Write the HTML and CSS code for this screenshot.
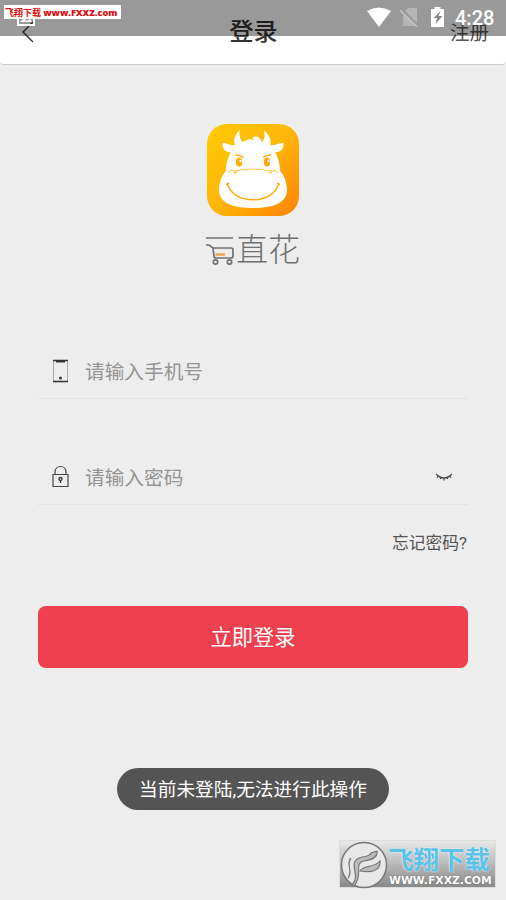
FILE: index.html
```html
<!DOCTYPE html>
<html lang="zh-CN">
<head>
    <meta charset="UTF-8">
    <meta name="viewport" content="width=device-width, initial-scale=1.0">
    <title>登录</title>
    <link rel="stylesheet" href="styles.css">
</head>
<body>
    <div class="status-bar">
        <svg class="picture-icon" width="18" height="15" viewBox="0 0 18 15">
            <path d="M1 1h16v13H1z" fill="none" stroke="#fff" stroke-width="2"/>
            <path d="M3 11l4-4 3 3 3-2 2 3z" fill="#fff"/>
        </svg>
        <div class="status-icons">
            <svg width="26" height="20" viewBox="0 0 26 20">
                <path d="M1 4Q13-3 25 4L13 20z" fill="#fff"/>
            </svg>
            <svg width="19" height="20" viewBox="0 0 19 20">
                <path d="M8 1h9v18H3V6z" fill="#b5b5b5"/>
                <path d="M1 2l17 17" stroke="#999" stroke-width="3"/>
                <path d="M0 3l17 17" stroke="#c2c2c2" stroke-width="1.6"/>
            </svg>
            <svg width="13" height="20" viewBox="0 0 13 20">
                <path d="M3.500 2V0h6v2H13v18H0V2z" fill="#fff"/>
                <path d="M9.500 4L2.500 11h3.500l-1.500 6L11.500 9H7.500z" fill="#888"/>
            </svg>
            <span class="clock">4:28</span>
        </div>
    </div>
    <div class="site-tag">飞翔下载 <b>www.FXXZ.com</b></div>

    <header class="header">
        <a class="back" href="#">
            <svg width="14" height="22" viewBox="0 0 14 22">
                <path d="M12 1L2 11l10 10" fill="none" stroke="#333" stroke-width="1.400"/>
            </svg>
        </a>
        <h1>登录</h1>
        <a class="register" href="#">注册</a>
    </header>

    <main class="container">
        <div class="logo">
            <svg width="92" height="92" viewBox="0 0 92 92">
                <defs>
                    <linearGradient id="gold" x1="0" y1="0" x2="1" y2="1">
                        <stop offset="0" stop-color="#ffcb05"/>
                        <stop offset="0.5" stop-color="#ffb508"/>
                        <stop offset="1" stop-color="#ff8205"/>
                    </linearGradient>
                </defs>
                <rect width="92" height="92" rx="20" fill="url(#gold)"/>
                <path d="M32.500 6C28 11 26 16 28 21C24 22 20 19 15.500 19C15 25 19 29 24 28C20 35 19 42 19 47C14 52 12 60 12 67C13 80 28 84 46 84C64 84 79 80 80 67C80 60 78 52 73 47C73 42 72 35 68 28C73 29 77 25 76.500 19C72 19 68 22 63 21C65 16 62 11 57 6C58 11 58 15 55 18C53 13 49 11 45 14L47 16C42 14 39 16 36 18C33 16 32 11 32.500 6z" fill="#fff"/>
                <path d="M21 49Q23 45 27 47Q46 43 65 47Q69 45 71 49" fill="none" stroke="#ffb018" stroke-width="0.800"/>
                <path d="M27 49l3-1M65 49l-3-1" stroke="#ffb018" stroke-width="1.200"/>
                <path d="M28.500 31Q33 31 36.500 33.500M64 31Q59 31 56 33.500" fill="none" stroke="#ffad05" stroke-width="1.600"/>
                <ellipse cx="32" cy="38" rx="3.200" ry="4.600" fill="#ffad05"/>
                <ellipse cx="60" cy="38" rx="3.200" ry="4.600" fill="#ffa505"/>
                <circle cx="33.500" cy="37" r="1.200" fill="#fff"/>
                <circle cx="61.500" cy="37" r="1.200" fill="#fff"/>
                <path d="M20.500 60C26 81 66 81 71.500 60" fill="none" stroke="#ffaa10" stroke-width="1.400"/>
                <path d="M19 60.500l3-1.500M73 60.500l-3-1.500" stroke="#ffaa10" stroke-width="1.400"/>
            </svg>
            <div class="wordmark">
                <svg width="30" height="32" viewBox="0 0 30 32">
                    <g fill="none" stroke="#707070" stroke-width="1.700">
                        <path d="M0 4h27M0 11h3l4 3h18q2 0 2 2v6q0 2-2 2H10q-2 0-2-2L7 14"/>
                        <circle cx="9.500" cy="28" r="2.200"/>
                        <circle cx="23.500" cy="28" r="2.200"/>
                    </g>
                    <path d="M9.500 20.500h9.500" stroke="#f7a046" stroke-width="2.400"/>
                </svg>
                <span>直花</span>
            </div>
        </div>

        <form class="login-form">
            <label class="field">
                <svg class="field-icon" width="17" height="24" viewBox="0 0 17 24">
                    <path d="M1.500 1v21M15.500 1v21" stroke="#aaa"/>
                    <path d="M1 1.500h15M1 22.500h15" stroke="#333" stroke-width="1.400"/>
                    <path d="M4 2h9v1.500H4z" fill="#333"/>
                    <circle cx="8.500" cy="19" r="1.500" fill="#333"/>
                </svg>
                <input type="text" placeholder="请输入手机号">
            </label>
            <label class="field">
                <svg class="field-icon" width="17" height="24" viewBox="0 0 17 24">
                    <path d="M1 9.500h15v12H1zM3 9V7.500C3-0.500 14-0.500 14 7.500V9" fill="none" stroke="#444" stroke-width="1.200"/>
                    <circle cx="8.500" cy="14" r="1.500" fill="none" stroke="#333" stroke-width="1.300"/>
                    <path d="M8.500 15.500v2.500" stroke="#333" stroke-width="1.300"/>
                </svg>
                <input type="password" placeholder="请输入密码">
                <svg class="eye" width="18" height="8" viewBox="0 0 18 8">
                    <path d="M1 1Q9 9 17 1M3.500 3L2 4.500M9 5v2.500M14.500 3l1.500 1.500M6 4.500l-.8 1.500M12 4.500l.8 1.500" fill="none" stroke="#444" stroke-width="1.200"/>
                </svg>
            </label>
            <a class="forgot" href="#">忘记密码?</a>
            <button class="button" type="button">立即登录</button>
        </form>
    </main>

    <div class="toast">当前未登陆,无法进行此操作</div>

    <div class="watermark">
        <svg width="48" height="48" viewBox="0 0 48 48">
            <circle cx="24" cy="24" r="22.500" fill="#e8e8e8" stroke="#777" stroke-width="1.500"/>
            <path d="M12 44C21 35 9 24 17 18C23 14 29 17 31 12L37 10C38 17 31 19 24 20C13 22 24 34 14 45z" fill="#bbb" stroke="#777" stroke-width="1.200"/>
            <path d="M20 30C23 24 35 27 40 20C41 30 31 32 20 30zM8 37C14 30 5 23 11 17" fill="#bbb" stroke="#777" stroke-width="1.200"/>
        </svg>
        <div class="watermark-text">
            <strong>飞翔下载</strong>
            <span>WWW.FXXZ.COM</span>
        </div>
    </div>
</body>
</html>
```
FILE: styles.css
```css
* {
    box-sizing: border-box;
}
body {
    font-family: Roboto, "Noto Sans CJK SC", sans-serif;
    margin: 0;
    height: 900px;
    overflow: hidden;
    background-color: #ededed;
    color: #333;
}
a {
    color: inherit;
    text-decoration: none;
}
.status-bar {
    position: absolute;
    top: 0;
    left: 0;
    z-index: 2;
    width: 100%;
    height: 36px;
    padding: 7px 11px 0 17px;
    display: flex;
    justify-content: space-between;
    background: rgba(0,0,0,0.4);
}
.picture-icon {
    margin-top: 4px;
}
.status-icons {
    display: flex;
    align-items: flex-start;
}
.status-icons svg + svg {
    margin-left: 8px;
}
.status-icons svg:nth-child(3) {
    margin-left: 12px;
}
.clock {
    width: 40px;
    margin-left: 11px;
    color: #fff;
    font-size: 20px;
    font-weight: 500;
    line-height: 23px;
}
.site-tag {
    position: absolute;
    top: 5px;
    left: 4px;
    z-index: 3;
    width: 117px;
    height: 14px;
    padding-left: 1px;
    background: #fff;
    color: #e01010;
    font-size: 9px;
    font-weight: bold;
    line-height: 15px;
    white-space: nowrap;
}
.site-tag b {
    font-family: "Open Sans", sans-serif;
    font-size: 9.2px;
}
.header {
    height: 65px;
    padding: 0 17px 0 21px;
    display: grid;
    grid-template-columns: 1fr 51px 1fr;
    align-items: center;
    background: #fff;
    border-bottom: 1px solid #ccc;
    border-radius: 0 0 4px 4px;
}
.back {
    display: flex;
}
.header h1 {
    margin: 0;
    font-size: 24px;
    font-weight: 500;
    line-height: 60px;
}
.register {
    justify-self: end;
    padding-top: 3px;
    color: #555;
    font-size: 19.5px;
    line-height: 30px;
}
.container {
    padding: 59px 38px 0;
}
.logo {
    display: flex;
    flex-direction: column;
    align-items: center;
}
.wordmark {
    height: 36px;
    margin-top: 16px;
    display: flex;
    align-items: center;
    color: #707070;
    font-size: 32px;
    font-weight: 300;
    line-height: 36px;
}
.login-form {
    margin-top: 76px;
}
.field {
    height: 55px;
    padding: 0 15px 0 14px;
    display: flex;
    align-items: center;
    border-bottom: 1px solid #e2e2e2;
}
.field + .field {
    margin-top: 51px;
}
.field-icon {
    margin-right: 16px;
}
.field input {
    flex: 1;
    min-width: 0;
    height: 42px;
    padding: 3px 0 0;
    border: none;
    outline: none;
    background: none;
    font-family: inherit;
    font-size: 19.7px;
}
.field input::placeholder {
    color: #949494;
}
.forgot {
    display: block;
    margin-top: 26px;
    padding-right: 1px;
    color: #555;
    font-size: 16.8px;
    line-height: 24px;
    text-align: right;
}
.button {
    width: 100%;
    height: 62px;
    margin-top: 51px;
    padding: 0 0 3px;
    display: block;
    border: none;
    border-radius: 8px;
    background: #ef404f;
    color: #fff;
    font-family: inherit;
    font-size: 21.3px;
}
.toast {
    position: absolute;
    top: 768px;
    left: 117px;
    width: 272px;
    height: 42px;
    border-radius: 21px;
    background: #545454;
    color: #fff;
    font-size: 18.7px;
    line-height: 44px;
    text-align: center;
    white-space: nowrap;
}
.watermark {
    position: absolute;
    top: 840px;
    left: 339px;
    width: 157px;
    height: 48px;
    display: flex;
    border: 1px solid #ddd;
    background: linear-gradient(#e8e8e8, #888);
}
.watermark svg {
    flex: none;
}
.watermark-text {
    display: flex;
    flex-direction: column;
    white-space: nowrap;
}
.watermark-text strong {
    color: #5bc3e8;
    font-size: 25.5px;
    font-weight: 700;
    line-height: 28px;
    padding-top: 5px;
    text-shadow: 0 0 2px #fff;
}
.watermark-text span {
    padding-left: 1px;
    color: #fff;
    font-family: "DejaVu Sans", sans-serif;
    font-size: 10.8px;
    font-weight: bold;
    line-height: 13px;
    text-shadow: 0 0 1px #555;
}
```
